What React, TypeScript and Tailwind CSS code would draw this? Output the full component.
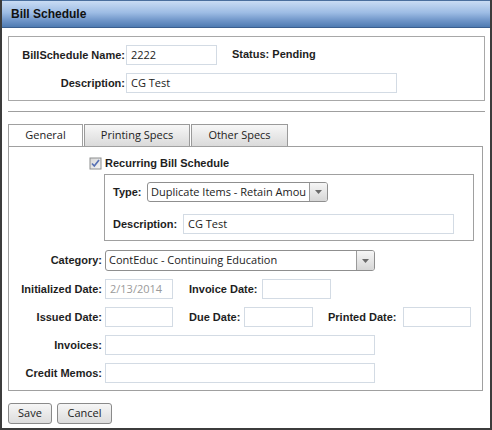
import React from "react";

const LBL = "font-['Liberation_Sans',Arial,sans-serif] font-bold text-[11px] text-[#1e1e1e] leading-none whitespace-nowrap";
const FONT = "font-['Open_Sans','Noto_Sans',sans-serif] text-[11px]";

function Input({ w, value = "", disabled = false }: { w: string; value?: string; disabled?: boolean }) {
  return (
    <div className={`${w} h-[20px] border border-[#d3dbe4] bg-white flex items-center pl-[4px] overflow-hidden whitespace-nowrap ${FONT} ${disabled ? "text-[#9a9a9a]" : "text-[#222]"}`}>
      {value}
    </div>
  );
}

function Select({ w, h, value }: { w: string; h: string; value: string }) {
  return (
    <div className={`${w} ${h} border border-[#8f8f8f] rounded-[3px] bg-white flex items-stretch overflow-hidden`}>
      <div className={`flex-1 flex items-center pl-[3px] overflow-hidden whitespace-nowrap ${FONT} text-[#222]`}>{value}</div>
      <div className="w-[18px] border-l border-[#9a9a9a] bg-[linear-gradient(to_bottom,#f6f6f6,#d6d6d6)] flex items-center justify-center">
        <svg width="7" height="4" viewBox="0 0 7 4">
          <path d="M0 0 L7 0 L3.5 4 Z" fill="#6a6a6a" />
        </svg>
      </div>
    </div>
  );
}

function Label({ children, w }: { children: React.ReactNode; w?: string }) {
  return <div className={`${LBL} ${w ?? ""}`}>{children}</div>;
}

const TAB = `h-[22px] border border-b-0 flex items-center justify-center ${FONT} text-[#222]`;
const BTN = `h-[21px] border border-[#8a8a8a] rounded-[3px] bg-[linear-gradient(to_bottom,#f6f6f6,#dcdcdc)] flex items-center justify-center ${FONT} text-[#222]`;

export default function App() {
  return (
    <div className="w-[492px] h-[430px] bg-white border-x-2 border-b-2 border-[#3c3c3c] flex flex-col box-border">
      <div className="h-[28px] shrink-0 border-t border-[#4a6f9e] border-b border-b-[#3b5f8f] bg-[linear-gradient(to_bottom,#c9dcf4,#9dbce4_45%,#6f95c8_75%,#4f7bb2)] flex items-center pl-[9px]">
        <span className="font-['Liberation_Sans',Arial,sans-serif] font-bold text-[12px] text-[#111]">Bill Schedule</span>
      </div>

      <div className="px-[6px] flex flex-col">
        <div className="mt-[8px] w-[477px] border border-[#a8a8a8] pt-[8px] pb-[7px] flex flex-col gap-[8px]">
          <div className="flex items-center h-[20px]">
            <Label w="w-[116px] text-right">BillSchedule Name:</Label>
            <div className="ml-[1px]">
              <Input w="w-[91px]" value="2222" />
            </div>
            <Label w="ml-[15px] -mt-[2px]">Status: Pending</Label>
          </div>
          <div className="flex items-center h-[20px]">
            <Label w="w-[116px] text-right">Description:</Label>
            <div className="ml-[1px]">
              <Input w="w-[271px]" value="CG Test" />
            </div>
          </div>
        </div>

        <div className="mt-[10px] h-px w-[477px] bg-[#9f9f9f]" />

        <div className="mt-[12px] flex h-[22px]">
          <div className={`${TAB} w-[75px] border-[#a0a0a0] bg-white`}>General</div>
          <div className={`${TAB} ml-[1px] w-[106px] border-[#9a9a9a] bg-[linear-gradient(to_bottom,#f7f7f7,#dadada)]`}>Printing Specs</div>
          <div className={`${TAB} ml-[1px] w-[97px] border-[#9a9a9a] bg-[linear-gradient(to_bottom,#f7f7f7,#dadada)]`}>Other Specs</div>
        </div>

        <div className="w-[475px] h-[245px] border border-[#a0a0a0] flex flex-col pt-[10px]">
          <div className="flex items-center h-[13px] ml-[80px]">
            <svg width="13" height="13" viewBox="0 0 13 13">
              <defs>
                <linearGradient id="cbg" x1="0" y1="0" x2="1" y2="1">
                  <stop offset="0" stopColor="#d8d8d8" />
                  <stop offset="1" stopColor="#f4f4f4" />
                </linearGradient>
              </defs>
              <rect x="0.5" y="0.5" width="12" height="12" fill="#8e8f8f" />
              <rect x="1.5" y="1.5" width="10" height="10" fill="url(#cbg)" />
              <path d="M3 6.5 L5.3 9 L10 3" stroke="#5670b4" strokeWidth="1.7" fill="none" />
            </svg>
            <Label w="ml-[3px]">Recurring Bill Schedule</Label>
          </div>

          <div className="mt-[4px] ml-[95px] w-[370px] h-[67px] border border-[#a0a0a0] pt-[7px] pl-[8px] flex flex-col">
            <div className="flex items-center h-[20px]">
              <Label w="w-[34px]">Type:</Label>
              <Select w="w-[181px]" h="h-[20px]" value="Duplicate Items - Retain Amou" />
            </div>
            <div className="mt-[12px] flex items-center h-[20px]">
              <Label w="w-[70px]">Description:</Label>
              <Input w="w-[271px]" value="CG Test" />
            </div>
          </div>

          <div className="mt-[9px] flex items-center h-[21px]">
            <Label w="w-[93px] text-right mr-[3px]">Category:</Label>
            <Select w="w-[270px]" h="h-[21px]" value="ContEduc - Continuing Education" />
          </div>

          <div className="mt-[8px] flex items-center h-[20px]">
            <Label w="w-[93px] text-right mr-[3px]">Initialized Date:</Label>
            <Input w="w-[68px]" value="2/13/2014" disabled />
            <Label w="ml-[16px] w-[73px]">Invoice Date:</Label>
            <Input w="w-[69px]" />
          </div>

          <div className="mt-[8px] flex items-center h-[20px]">
            <Label w="w-[93px] text-right mr-[3px]">Issued Date:</Label>
            <Input w="w-[68px]" />
            <Label w="ml-[16px] w-[55px]">Due Date:</Label>
            <Input w="w-[69px]" />
            <Label w="ml-[15px] w-[75px]">Printed Date:</Label>
            <Input w="w-[68px]" />
          </div>

          <div className="mt-[8px] flex items-center h-[20px]">
            <Label w="w-[93px] text-right mr-[3px]">Invoices:</Label>
            <Input w="w-[270px]" />
          </div>

          <div className="mt-[8px] flex items-center h-[20px]">
            <Label w="w-[93px] text-right mr-[3px]">Credit Memos:</Label>
            <Input w="w-[270px]" />
          </div>
        </div>

        <div className="mt-[12px] flex gap-[5px]">
          <div className={`${BTN} w-[44px]`}>Save</div>
          <div className={`${BTN} w-[55px]`}>Cancel</div>
        </div>
      </div>
    </div>
  );
}
